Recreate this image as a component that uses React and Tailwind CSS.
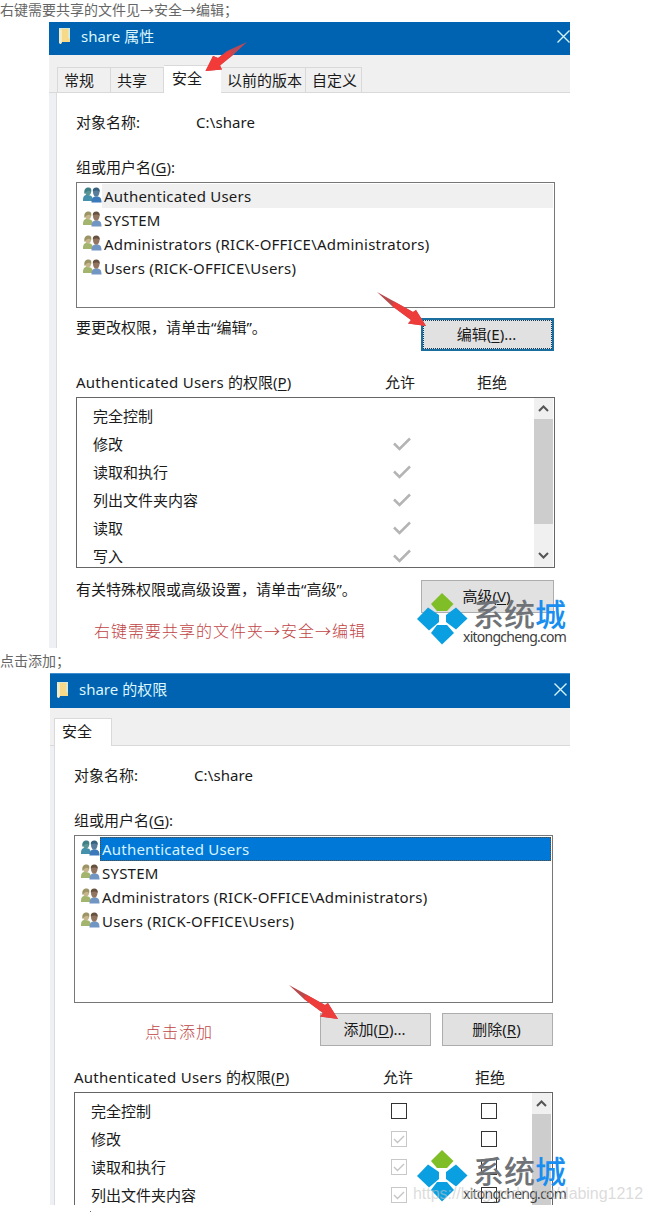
import clsx from 'clsx';

const principals = [
  'Authenticated Users',
  'SYSTEM',
  'Administrators (RICK-OFFICE\\Administrators)',
  'Users (RICK-OFFICE\\Users)',
];

const FolderIcon = () => (
  <svg width="14" height="18" viewBox="0 0 14 18" className="shrink-0">
    <path d="M1 1h11v13h-8l-1 3-2-1z" fill="#d9e8cf" />
    <path d="M4 2h6v9l2 1v3H4z" fill="#f7d98a" />
    <path d="M1 2l3 1v12l-1 2-2-1z" fill="#f4ecc4" />
  </svg>
);

const UsersIcon = ({ tint }) => (
  <svg width="19" height="16" viewBox="0 0 19 16" className="shrink-0">
    <path d="M0 13.500c0-4 1-5.500 4-5.500s5.500 1 5.500 3.500v2.500H0z" fill={tint ? '#4590aa' : '#a3b56c'} />
    <path d="M2 4.500C2 2 3.200 1 5 1s3.200 1.200 3.200 3.500S7 8.500 5 8.500 2 7 2 4.500z" fill={tint ? '#5a9595' : '#c5b58a'} />
    <path d="M1.500 7C0.500 2 3 0.500 5.500 0.500 8 0.500 9 2 8 5 6.500 3 4 3 1.500 7z" fill={tint ? '#3f7f86' : '#9c9464'} />
    <path d="M8.500 15.500c0-4.500 1.500-6 5-6s5 1.500 5 6z" fill={tint ? '#3b79bb' : '#7196c4'} />
    <path d="M10 5c0-2.500 1.200-3.800 3.200-3.800S16.500 2.500 16.500 5s-1.300 4.800-3.300 4.800S10 7.500 10 5z" fill={tint ? '#587d9c' : '#927561'} />
    <path d="M9.800 4.500C9.500 2 11 0.500 13.300 0.500s3.900 1.500 3.400 4.500C15 3 12.500 3 9.800 4.500z" fill={tint ? '#36607c' : '#66513f'} />
  </svg>
);

const CloseIcon = () => (
  <svg width="13" height="13" viewBox="0 0 13 13" className="shrink-0">
    <path d="M0.500 0.500l12 12M12.500 0.500l-12 12" stroke="#d5f3fb" strokeWidth="1.400" />
  </svg>
);

const Chevron = ({ down }) => (
  <svg width="11" height="7" viewBox="0 0 11 7" className={clsx(down && 'rotate-180')}>
    <path d="M1 6l4.500-4.500L10 6" fill="none" stroke="#555" strokeWidth="2" />
  </svg>
);

const Tick = () => (
  <svg width="18" height="14" viewBox="0 0 18 14">
    <path d="M1 6.500l5.500 5.500L17 1.500" fill="none" stroke="#b4b4b4" strokeWidth="2.500" />
  </svg>
);

const CheckBox = ({ checked }) => (
  <span
    className={clsx(
      'flex h-4 w-4 items-center justify-center border bg-white',
      checked ? 'border-[#c8c8c8]' : 'border-[#333]'
    )}
  >
    {checked && (
      <svg width="12" height="9" viewBox="0 0 12 9">
        <path d="M1 4l3.500 3.500L11 1" fill="none" stroke="#c4c4c4" strokeWidth="1.400" />
      </svg>
    )}
  </span>
);

// red pointer, tip at the bottom right
const Arrow = ({ className }) => (
  <svg width="49" height="35" viewBox="0 0 49 35" className={className}>
    <path d="M0 0L20 11 36 20 39 18 49 34 31 31.500 34 28 15 14z" fill="#b94a4c" />
    <path d="M17 9.500L36 20 39 18 49 34 31 31.500 34 28 15 14z" fill="#ee3c3a" />
  </svg>
);

const Watermark = ({ className }) => (
  <div className={clsx('flex w-[150px]', className)}>
    <svg width="51" height="52" viewBox="0 0 51 52" className="shrink-0">
      <path d="M25 0L36.500 11 30 18H20L14 11z" fill="#80be27" />
      <path d="M11 14.500L22 22v7L12 37.500 0 26z" fill="#0a9fe0" />
      <path d="M39 14.500L50.500 25.500 39 36.500 29 29v-7z" fill="#0a9fe0" />
      <path d="M20 32h10l7 8-12 11.500L14 40z" fill="#0a9fe0" />
    </svg>
    <div className="ml-[5px] flex flex-col whitespace-nowrap">
      <span className="mt-[2px] h-[33px] text-[31px] leading-[38px] font-medium text-[#6f7377]">
        系统<span className="text-[#188ef0]">城</span>
      </span>
      <span className="-ml-[10px] mt-[1px] text-[14px] leading-[16px] tracking-[-0.75px] text-[#3d3d3d]">
        xitongcheng.com
      </span>
    </div>
  </div>
);

const Button = ({ label, hotkey, dots, focused, className }) => (
  <button
    className={clsx(
      'flex h-[33px] shrink-0 bg-[#e1e1e1]',
      focused ? 'border-2 border-[#1b6f9f]' : 'border border-[#adadad]',
      className
    )}
  >
    <span
      className={clsx(
        'flex h-full w-full items-center justify-center pr-[2px]',
        focused && 'border border-dotted border-[#123c5c]'
      )}
    >
      {label}(<u className="underline-offset-2">{hotkey}</u>){dots && '...'}
    </span>
  </button>
);

const TitleBar = ({ title, className }) => (
  <div className={clsx('flex items-center bg-[#0063b1] text-[#dcf6fb]', className)}>
    <FolderIcon />
    <span className="ml-[9px] flex-1">{title}</span>
    <CloseIcon />
  </div>
);

const UserList = ({ selected, className }) => (
  <ul className={clsx('w-[479px] border border-[#777] pt-px', className)}>
    {principals.map((name, i) => (
      <li key={name} className="flex h-6 pl-[6px]">
        <span className="mt-[3px] h-4">
          <UsersIcon tint={i === 0} />
        </span>
        <span
          className={clsx(
            'mr-px h-6 flex-1 pl-[2px] leading-[25px] tracking-[0.22px]',
            i === 0 && (selected ? 'bg-[#0078d7] text-[#d6f3ff] outline-1 -outline-offset-1 outline-dotted outline-[#5c4a30]' : 'bg-[#f0f0f0]')
          )}
        >
          {name}
        </span>
      </li>
    ))}
  </ul>
);

const ObjectName = () => (
  <div className="flex h-6 items-center">
    <span className="w-[120px]">对象名称:</span>
    <span className="tracking-[0.1px]">C:\share</span>
  </div>
);

const GroupLabel = () => (
  <div className="mt-[21px] h-6 leading-6">
    组或用户名(<u className="underline-offset-2">G</u>):
  </div>
);

const PermissionHeader = ({ className }) => (
  <div className={clsx('flex h-6 items-center', className)}>
    <span className="w-[309px]">
      <span className="tracking-[0.25px]">Authenticated Users </span>
      的权限(<u className="underline-offset-2">P</u>)
    </span>
    <span className="w-[92px]">允许</span>
    <span>拒绝</span>
  </div>
);

const PermissionList = ({ names, editable, className }) => (
  <div className={clsx('flex w-[479px] overflow-hidden border border-[#666]', className)}>
    <ul className="flex-1 pt-[4px] pl-4">
      {names.map((name, i) => (
        <li key={name} className="flex h-7 items-center">
          <span className={editable ? 'w-[290px]' : 'w-[291px]'}>{name}</span>
          <span className="flex w-9 justify-center">
            {editable ? <CheckBox checked={i > 0} /> : i > 0 && <Tick />}
          </span>
          {editable && (
            <span className="ml-[54px] flex w-9 justify-center">
              <CheckBox />
            </span>
          )}
        </li>
      ))}
    </ul>
    <div className="mr-px flex w-[19px] flex-col bg-[#f0f0f0]">
      <div className="flex h-[21px] shrink-0 items-center justify-center">
        <Chevron />
      </div>
      <div className={clsx('shrink-0 bg-[#cdcdcd]', editable ? 'h-24' : 'h-[105px]')} />
      {!editable && (
        <div className="flex flex-1 items-end justify-center pb-[8px]">
          <Chevron down />
        </div>
      )}
    </div>
  </div>
);

const tabs = [
  { label: '常规', width: 'w-[54px] border-l' },
  { label: '共享', width: 'w-[53px]' },
  { label: '安全', width: 'w-[57px]', active: true },
  { label: '以前的版本', width: 'w-[85px]' },
  { label: '自定义', width: 'w-[56px]' },
];

const PropertiesDialog = () => (
  <section className="relative ml-[49px] h-[626px] w-[521px] bg-[#eef0f4]">
    <TitleBar title="share 属性" className="h-[33px] pb-[5px] pl-[9px]" />
    <div className="flex h-[38px] items-end bg-[#f0f0f0] pl-[8px] shadow-[inset_0_-1px_0_#d9d9d9]">
      {tabs.map((tab) => (
        <div
          key={tab.label}
          className={clsx(
            'border-[#d9d9d9] pl-[6px] whitespace-nowrap',
            tab.width,
            tab.active
              ? 'h-[28px] border-t bg-white pl-[8px] leading-[24px]'
              : 'h-[26px] border-t border-r border-b leading-[24px]'
          )}
        >
          {tab.label}
        </div>
      ))}
    </div>
    <div className="ml-[7px] h-[555px] border-l border-[#dcdcdc] bg-white pt-[17px] pl-[19px]">
      <ObjectName />
      <GroupLabel />
      <UserList className="mt-[3px] h-[126px]" />
      <div className="flex h-[62px] w-[478px] justify-between">
        <p className="mt-[7px] leading-6">要更改权限，请单击“编辑”。</p>
        <Button label="编辑" hotkey="E" dots focused className="mt-[10px] w-[133px]" />
      </div>
      <PermissionHeader />
      <PermissionList
        names={['完全控制', '修改', '读取和执行', '列出文件夹内容', '读取', '写入']}
        className="mt-[3px] h-[171px]"
      />
      <div className="flex w-[478px] justify-between">
        <p className="mt-[9px] leading-6">有关特殊权限或高级设置，请单击“高级”。</p>
        <Button label="高级" hotkey="V" className="mt-[12px] w-[133px]" />
      </div>
      <p className="mt-[6px] ml-[18px] text-base leading-6 font-light tracking-[1px] text-[#bf4446]">
        右键需要共享的文件夹→安全→编辑
      </p>
    </div>
    <Arrow className="absolute top-[270px] left-[328px]" />
    <svg width="43" height="31" viewBox="0 0 43 31" className="absolute top-[20px] left-[155px]">
      <path d="M43 0L23 9 14 16 9 14 1.500 29 18 27.500 16 23.500 28 14z" fill="#bb4a58" />
      <path d="M27 8L14 16 9 14 1.500 29 18 27.500 16 23.500 27 14z" fill="#f23a38" />
    </svg>
    <Watermark className="absolute top-[571px] left-[368px]" />
  </section>
);

const PermissionsDialog = () => (
  <section className="relative ml-[50px] h-[532px] w-[520px] overflow-hidden bg-[#eef0f4]">
    <TitleBar title="share 的权限" className="h-[35px] border-t border-[#3f8fd0] pr-[3px] pb-[3px] pl-[6px]" />
    <div className="flex h-[38px] items-end bg-[#f0f0f0] pl-[4px] shadow-[inset_0_-1px_0_#d9d9d9]">
      <div className="h-[28px] w-[58px] border-t border-r border-l border-[#d9d9d9] bg-white pl-[7px] leading-[25px]">
        安全
      </div>
    </div>
    <div className="ml-[4px] h-[460px] border-l border-[#d9dbe2] bg-white pt-[17px] pl-[19px]">
      <ObjectName />
      <GroupLabel />
      <UserList selected className="mt-[3px] h-[168px]" />
      <div className="flex w-[479px] items-start pt-[10px]">
        <p className="mt-[7px] ml-[71px] w-[175px] text-base leading-6 font-light tracking-[1px] text-[#bf4446]">
          点击添加
        </p>
        <Button label="添加" hotkey="D" dots className="w-[111px]" />
        <Button label="删除" hotkey="R" className="ml-[11px] w-[111px]" />
      </div>
      <PermissionHeader className="mt-[19px]" />
      <PermissionList
        names={['完全控制', '修改', '读取和执行', '列出文件夹内容']}
        editable
        className="mt-[3px] h-[122px] border-b-0"
      />
    </div>
    <Arrow className="absolute top-[312px] left-[239px]" />
    <Watermark className="absolute top-[477px] left-[367px]" />
  </section>
);

const Caption = ({ children }) => (
  <p className="text-[14px] text-[#666]">{children}</p>
);

const App = () => {
  return (
    <main className="relative h-[1212px] w-[652px] overflow-hidden bg-white font-['Noto_Sans','Noto_Sans_CJK_SC',sans-serif] text-[15px] text-[#1a1a1a]">
      <div className="h-[22px] leading-[19px]">
        <Caption>右键需要共享的文件见→安全→编辑；</Caption>
      </div>
      <PropertiesDialog />
      <div className="h-[25px] leading-[25px]">
        <Caption>点击添加；</Caption>
      </div>
      <PermissionsDialog />
      {/* first pixel of the next paragraph */}
      <div className="mt-[6px] ml-[90px] h-px w-px bg-[#666]" />
      <span className="absolute top-[1184px] left-[413px] font-['Liberation_Sans',sans-serif] text-[16px] leading-5 tracking-[-0.04px] whitespace-nowrap text-[#c4c4c4]/60">
        https://blog.csdn.net/dabing1212
      </span>
    </main>
  );
};

export default App;
